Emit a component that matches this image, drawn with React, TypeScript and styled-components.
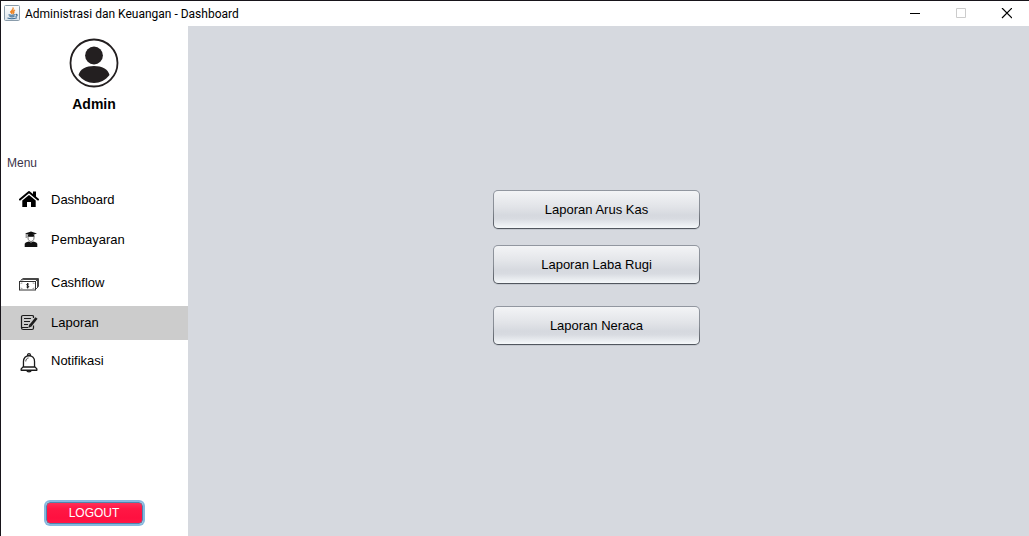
import React from "react";
import styled, { createGlobalStyle, css } from "styled-components";

const GlobalStyle = createGlobalStyle`
  *, *::before, *::after { box-sizing: border-box; }
  body { margin: 0; background: #ffffff; }
  button { font-family: inherit; }
`;

const Window = styled.div`
  display: flex;
  flex-direction: column;
  min-height: 100vh;
  border-top: 1px solid #17141a;
  border-left: 1px solid #17141a;
  background: #ffffff;
  color: #000000;
  font-family: "Liberation Sans", Arial, sans-serif;
  font-size: 13px;
  line-height: 16px;
`;

const TitleBar = styled.header`
  display: flex;
  align-items: center;
  height: 25px;
  padding-left: 3px;
`;

const WindowTitle = styled.h1`
  flex: 1;
  margin: 0 0 0 4px;
  font: 400 12px/16px Roboto, "Segoe UI", sans-serif;
`;

const WindowButton = styled.button`
  display: grid;
  place-items: center;
  width: 46px;
  height: 25px;
  padding: 0;
  border: 0;
  background: transparent;
  color: #000000;
  &:disabled { color: #cccccc; }
`;

const Body = styled.div`
  display: flex;
  flex: 1;
`;

const Sidebar = styled.aside`
  display: flex;
  flex-direction: column;
  flex: 0 0 187px;
  padding: 12px 0;
`;

const Profile = styled.div`
  display: flex;
  flex-direction: column;
  align-items: center;
  gap: 8px;
  padding-right: 1px;
`;

const UserName = styled.strong`
  font-size: 14px;
  line-height: 16px;
`;

const MenuHeading = styled.h2`
  margin: 43px 0 12px 6px;
  color: #3a3348;
  font-size: 12px;
  font-weight: 400;
  line-height: 16px;
`;

const MenuList = styled.ul`
  margin: 0;
  padding: 0;
  list-style: none;
`;

const MenuItem = styled.li<{ $space: number }>`
  margin-top: ${(p) => p.$space}px;
`;

const MenuLink = styled.a<{ $active?: boolean }>`
  display: flex;
  align-items: center;
  gap: 12px;
  height: 34px;
  padding-left: 18px;
  color: #000000;
  text-decoration: none;
  ${(p) => p.$active && css`background: #cccccc;`}
`;

const LogoutButton = styled.button`
  align-self: center;
  width: 97px;
  height: 22px;
  margin-top: auto;
  margin-right: 1px;
  padding: 0;
  border: 1px solid #4d86ad;
  border-radius: 4px;
  background: linear-gradient(#ff2f57, #ff1744 30%, #ff1040 75%, #ff1744);
  box-shadow: 0 0 0 2px #86b9e0;
  color: #ffffff;
  font-size: 12px;
  line-height: 16px;
`;

const Content = styled.main`
  display: flex;
  flex: 1;
  flex-direction: column;
  align-items: center;
  padding: 164px 24px 24px 0;
  background: #d6d9df;
`;

const ReportButton = styled.button<{ $space?: number }>`
  width: 207px;
  height: 39px;
  margin-top: ${(p) => p.$space ?? 0}px;
  padding: 0;
  border: 1px solid transparent;
  border-radius: 5px;
  background:
    linear-gradient(#f3f4f6, #e3e5e9 40%, #d6d9df 65%, #d8dbe1 75%, #f5f8fa) padding-box,
    linear-gradient(#9297a0, #888d95 50%, #50555d) border-box;
  box-shadow: 0 1px 0 #c4c8cf;
  color: #000000;
  font-size: 13px;
  line-height: 16px;
`;

const JavaIcon = () => (
  <svg width="17" height="17" viewBox="0 0 17 17" aria-hidden="true">
    <defs>
      <linearGradient id="tile" x1="0" y1="0" x2="0" y2="1">
        <stop offset="0" stopColor="#ffffff" />
        <stop offset="1" stopColor="#dde5ec" />
      </linearGradient>
    </defs>
    <rect x="0.5" y="0.5" width="15" height="15" rx="1" fill="url(#tile)" stroke="#8a9cab" />
    <path d="M9 2.500C10 4.500 6 5.500 6.500 7.200Q6.800 8.300 8.300 9C7.200 7.500 10 5.500 9 2.500M11 5C8.500 5.700 8 7 9.200 8Q9.700 8.500 9 9.200C11.500 7.800 8.800 7 11 5" fill="#ee8424" stroke="#ee8424" strokeWidth=".8" />
    <path d="M4.500 9.700Q7.500 10.700 11 9.700M5.500 11.500Q8 12.300 10.500 11.500M3.500 13Q8 14.600 13 12.700M11.500 9.500C14 9 13.500 11 11.500 11.500" fill="none" stroke="#3d6c94" strokeWidth="1.100" />
  </svg>
);

const AvatarIcon = () => (
  <svg width="50" height="50" viewBox="0 0 50 50" aria-hidden="true">
    <circle cx="25" cy="25" r="23.500" fill="none" stroke="#231f20" strokeWidth="1.800" />
    <circle cx="25" cy="17.500" r="8.900" fill="#231f20" />
    <path d="M9.500 37C11 31 17 28 25 28s14 3 15.500 9C36.500 42.300 31 45 25 45S13.500 42.300 9.500 37Z" fill="#231f20" />
  </svg>
);

const HomeIcon = () => (
  <svg width="20" height="20" viewBox="0 0 20 20" aria-hidden="true">
    <path d="M1 9.500 10 2l9 7.500" fill="none" stroke="#000" strokeWidth="2" strokeLinecap="round" strokeLinejoin="round" />
    <path d="M14 1.500h3v6l-3-2.600ZM3.300 10.400 10 4.900l6.700 5.500V17H12v-5H8v5H3.300Z" />
  </svg>
);

const StudentIcon = () => (
  <svg width="20" height="20" viewBox="0 0 20 20" aria-hidden="true">
    <path d="m6 3.500 6-2 6 2-6 2Z" fill="#111" />
    <path d="M8.700 4.500h6.600v2.300H8.700Z" fill="#111" />
    <path d="M9 6v2c0 2 1.500 3.500 3 3.500S15 10 15 8V6M7.200 4v4" fill="none" stroke="#666" strokeWidth=".9" />
    <path d="M5.700 17V13.800Q6 12.300 9.500 11.500L12 12.500l2.500-1Q18 12.300 18.300 13.800V17Z" fill="#111" />
  </svg>
);

const CashIcon = () => (
  <svg width="20" height="16" viewBox="0 -2 20 16" fill="none" stroke="#333" aria-hidden="true">
    <path d="M1.500 3.500 4 1.500h15.500v8L17 12M2.500 3 5 2.500h13.500v8M17 4l2-2" strokeWidth=".9" />
    <rect x=".5" y="4.500" width="16" height="8.500" fill="#fff" strokeWidth="1" />
    <path d="M2 7V6h1.500M13.500 6H15v1M2 10.500v1h1.500M13.500 11.500H15v-1" stroke="#888" strokeWidth=".7" />
    <path d="M9.700 7.200C8.500 6.600 7.500 7 7.700 7.900c.3 1 2 .7 2 1.700 0 .9-1.200 1-2.200.4M8.700 6v5.500" stroke="#000" strokeWidth=".9" />
  </svg>
);

const ReportIcon = () => (
  <svg width="20" height="18" viewBox="0 0 20 18" fill="none" stroke="#1c1c1c" aria-hidden="true">
    <path d="M14.500 4V2.500Q14.500 1.500 13 1.500H4Q2.500 1.500 2.500 2.500V14Q2.500 15.500 4.500 15.500h8.500q1.500 0 1.500-1.500V11.500M2.500 13.500h6.500" strokeWidth="1.200" />
    <path d="M5 4.500h7M5 7.500h6M5 10.500h4" strokeWidth="1.200" />
    <path d="m11.500 11.500 6-7.500" strokeWidth="2.800" />
    <path d="m9.300 14 1-3.700 2.500 2Z" fill="#1c1c1c" stroke="none" />
  </svg>
);

const BellIcon = () => (
  <svg width="20" height="24" viewBox="0 -4 20 26" fill="none" stroke="#1a1a1a" strokeWidth="1.400" strokeLinejoin="round" aria-hidden="true">
    <path d="M8.500 3.300V2.500a1.500 1.500 0 0 1 3 0v.8M4 15V9.500C4 5.800 6.500 3.300 10 3.300S16 5.800 16 9.500V15l2.500 2.500V19h-17v-1.500ZM3.800 15.500h12.400M7.500 19c.4 2.400 4.600 2.400 5 0" />
    <path d="M6.500 9.500C6.500 7.500 7.500 6 9.500 5.700" strokeWidth=".9" />
  </svg>
);

const menu = [
  { label: "Dashboard", icon: <HomeIcon />, space: 0 },
  { label: "Pembayaran", icon: <StudentIcon />, space: 6 },
  { label: "Cashflow", icon: <CashIcon />, space: 9 },
  { label: "Laporan", icon: <ReportIcon />, space: 6, active: true },
  { label: "Notifikasi", icon: <BellIcon />, space: 4 },
];

export default function App() {
  return (
    <>
      <GlobalStyle />
      <Window>
        <TitleBar>
          <JavaIcon />
          <WindowTitle>Administrasi dan Keuangan - Dashboard</WindowTitle>
          <WindowButton type="button" aria-label="Minimize">
            <svg width="12" height="12" viewBox="0 0 12 12"><path d="M2 5.500h10" stroke="currentColor" /></svg>
          </WindowButton>
          <WindowButton type="button" aria-label="Maximize" disabled>
            <svg width="12" height="12" viewBox="0 0 12 12"><path d="M2.500.500h9v9h-9Z" fill="none" stroke="currentColor" /></svg>
          </WindowButton>
          <WindowButton type="button" aria-label="Close">
            <svg width="12" height="12" viewBox="0 0 12 12"><path d="m2 0 10 10M12 0 2 10" stroke="currentColor" strokeWidth="1.200" /></svg>
          </WindowButton>
        </TitleBar>
        <Body>
          <Sidebar>
            <Profile>
              <AvatarIcon />
              <UserName>Admin</UserName>
            </Profile>
            <MenuHeading>Menu</MenuHeading>
            <nav aria-label="Menu">
              <MenuList>
                {menu.map((item) => (
                  <MenuItem key={item.label} $space={item.space}>
                    <MenuLink href="#" $active={item.active} aria-current={item.active ? "page" : undefined}>
                      {item.icon}
                      {item.label}
                    </MenuLink>
                  </MenuItem>
                ))}
              </MenuList>
            </nav>
            <LogoutButton type="button">LOGOUT</LogoutButton>
          </Sidebar>
          <Content>
            <ReportButton type="button">Laporan Arus Kas</ReportButton>
            <ReportButton type="button" $space={16}>Laporan Laba Rugi</ReportButton>
            <ReportButton type="button" $space={22}>Laporan Neraca</ReportButton>
          </Content>
        </Body>
      </Window>
    </>
  );
}
